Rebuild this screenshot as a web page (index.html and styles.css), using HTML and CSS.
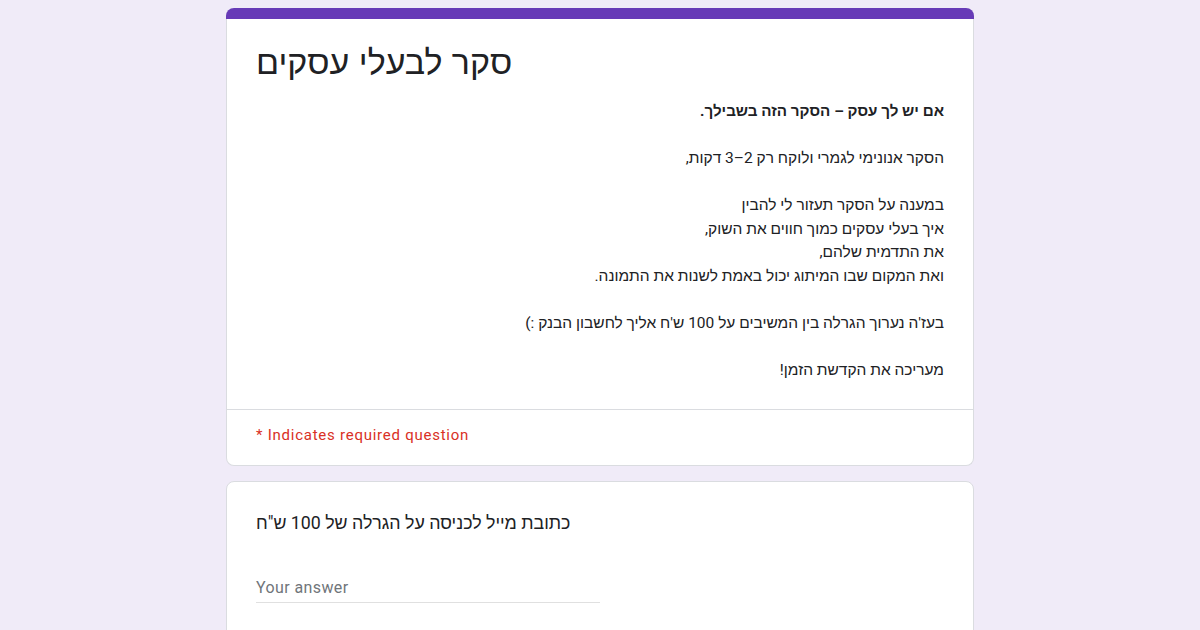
FILE: index.html
```html
<!DOCTYPE html>
<html>

<head>
	<meta charset="utf-8">
	<meta name="viewport" content="width=device-width, initial-scale=1">
	<title>סקר לבעלי עסקים</title>
	<link rel="stylesheet" href="styles.css">
</head>

<body>
	<div class="form">
		<div class="card header_card">
			<div class="accent"></div>
			<div class="header_body">
				<div class="form_title">סקר לבעלי עסקים</div>
				<div class="form_desc" dir="rtl">
					<b>אם יש לך עסק – הסקר הזה בשבילך.</b><br>
					<br>
					הסקר אנונימי לגמרי ולוקח רק 2–3 דקות,<br>
					<br>
					במענה על הסקר תעזור לי להבין<br>
					איך בעלי עסקים כמוך חווים את השוק,<br>
					את התדמית שלהם,<br>
					ואת המקום שבו המיתוג יכול באמת לשנות את התמונה.<br>
					<br>
					בעז'ה נערוך הגרלה בין המשיבים על 100 ש'ח אליך לחשבון הבנק :)<br>
					<br>
					מעריכה את הקדשת הזמן!
				</div>
			</div>
			<div class="required_note">* Indicates required question</div>
		</div>

		<div class="card question_card">
			<div class="question_title">כתובת מייל לכניסה על הגרלה של 100 ש"ח</div>
			<div class="answer_box">
				<span class="placeholder">Your answer</span>
			</div>
		</div>
	</div>
</body>

</html>
```

FILE: styles.css
```css
body {
	margin: 0;
	background-color: #F0EBF8;
	color: #202124;
	font-family: Roboto, "Liberation Sans", Arial, sans-serif;
}

.form {
	width: 748px;
	margin: 8px auto 0;
	display: flex;
	flex-direction: column;
	gap: 15px;
}

.card {
	background-color: #FFFFFF;
	border: 1px solid #DADCE0;
	border-radius: 8px;
}

.header_card {
	border-top: none;
}

.accent {
	height: 11px;
	margin: 0 -1px;
	background-color: #673AB7;
	border-radius: 8px 8px 0 0;
}

.header_body {
	padding: 23px 29px 27px 29px;
	border-bottom: 1px solid #DADCE0;
}

.form_title {
	font-family: "Liberation Sans", Arial, sans-serif;
	font-size: 34px;
	line-height: 40px;
	margin-bottom: 18px;
}

.form_desc {
	font-family: Roboto, "Liberation Sans", Arial, sans-serif;
	font-size: 15.5px;
	line-height: 23.5px;
	text-align: right;
}

.form_desc b {
	font-size: 15.2px;
}

/* red note under the header */
.required_note {
	padding: 15px 29px 20px;
	font-size: 15px;
	line-height: 20px;
	letter-spacing: 0.75px;
	color: #D93025;
}

.question_card {
	padding: 29px 29px 40px;
}

.question_title {
	font-size: 17.8px;
	line-height: 24px;
	margin-bottom: 43px;
}

.answer_box {
	width: 344px;
	padding-bottom: 4px;
	border-bottom: 1px solid #E0E0E0;
	font-size: 16px;
	line-height: 20px;
}

.placeholder {
	color: #70757A;
	letter-spacing: 0.4px;
}
```
